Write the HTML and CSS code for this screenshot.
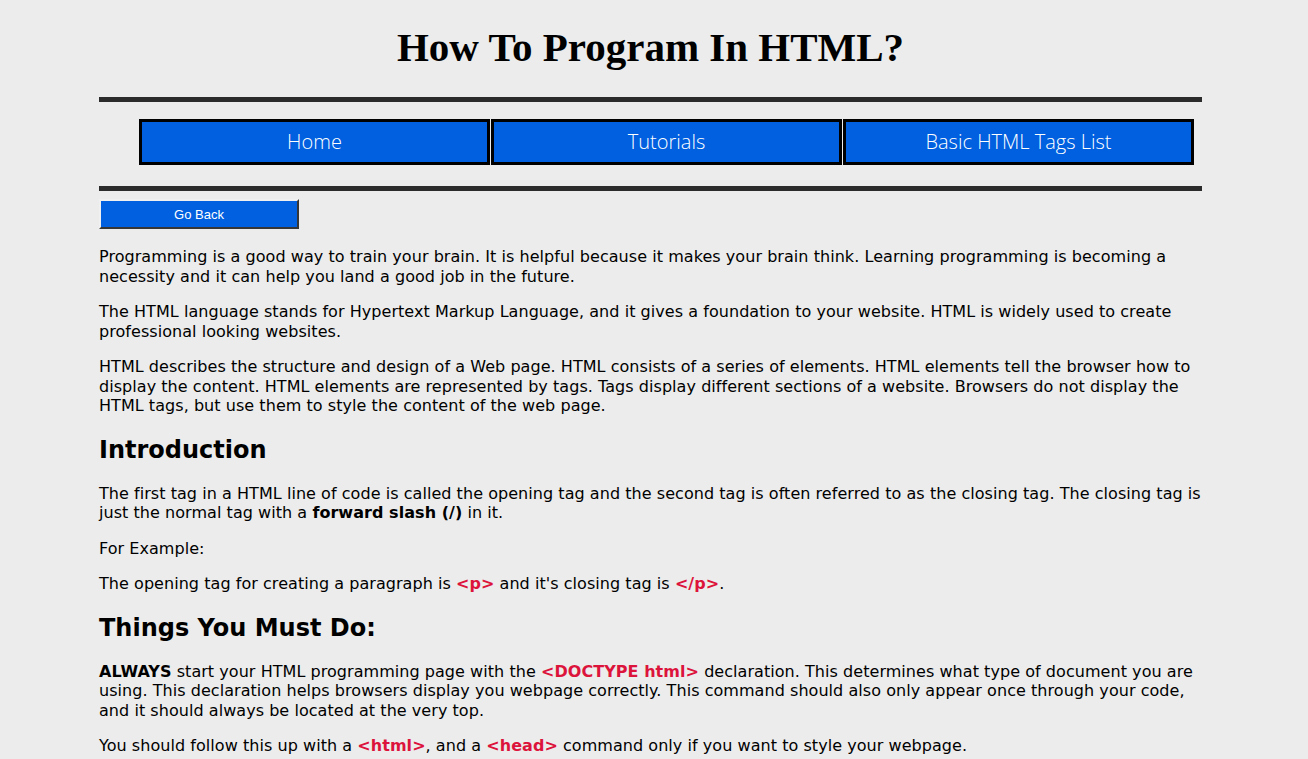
FILE: index.html
```html
<!DOCTYPE html>
<html>
<head>
<meta charset="utf-8">
<link rel="stylesheet" href="styles.css">
</head>
<body>
<div class="page">
  <h1 class="title">How To Program In HTML?</h1>
  <hr class="rule">
  <ul class="nav">
    <li class="nav-item">Home</li>
    <li class="nav-item">Tutorials</li>
    <li class="nav-item">Basic HTML Tags List</li>
  </ul>
  <hr class="rule">
  <button class="back">Go Back</button>
  <p>Programming is a good way to train your brain. It is helpful because it makes your brain think. Learning programming is becoming a necessity and it can help you land a good job in the future.</p>
  <p>The HTML language stands for Hypertext Markup Language, and it gives a foundation to your website. HTML is widely used to create professional looking websites.</p>
  <p>HTML describes the structure and design of a Web page. HTML consists of a series of elements. HTML elements tell the browser how to display the content. HTML elements are represented by tags. Tags display different sections of a website. Browsers do not display the HTML tags, but use them to style the content of the web page.</p>
  <h2>Introduction</h2>
  <p>The first tag in a HTML line of code is called the opening tag and the second tag is often referred to as the closing tag. The closing tag is just the normal tag with a <b>forward slash (/)</b> in it.</p>
  <p>For Example:</p>
  <p>The opening tag for creating a paragraph is <span class="code">&lt;p&gt;</span> and it's closing tag is <span class="code">&lt;/p&gt;</span>.</p>
  <h2>Things You Must Do:</h2>
  <p><b>ALWAYS</b> start your HTML programming page with the <span class="code">&lt;DOCTYPE html&gt;</span> declaration. This determines what type of document you are using. This declaration helps browsers display you webpage correctly. This command should also only appear once through your code, and it should always be located at the very top.</p>
  <p>You should follow this up with a <span class="code">&lt;html&gt;</span>, and a <span class="code">&lt;head&gt;</span> command only if you want to style your webpage.</p>
</div>
</body>
</html>
```
FILE: styles.css
```css
html, body {
  margin: 0;
  padding: 0;
  background: #ececec;
}
.page {
  width: 1103px;
  margin-left: 99px;
  font-family: "DejaVu Sans", Verdana, sans-serif;
  font-size: 16px;
  line-height: 19.5px;
  color: #000;
  padding-top: 1px;
}
.page p {
  letter-spacing: 0.05px;
  margin-right: -4px;
}
.title {
  font-family: "Liberation Serif", "DejaVu Serif", serif;
  font-weight: bold;
  font-size: 41px;
  line-height: 48px;
  text-align: center;
  margin: 22px 0 26px;
}
.rule {
  margin: 0;
  height: 5px;
  border: none;
  background: #2b2b2b;
}
.nav {
  list-style: none;
  display: flex;
  margin: 17px 0 21px;
  padding: 0 0 0 40px;
}
.nav-item {
  width: 351px;
  height: 46px;
  box-sizing: border-box;
  border: 3px solid #000;
  background: #0060e0;
  color: #fff;
  font-family: "Open Sans", sans-serif;
  font-weight: 300;
  font-size: 20px;
  display: flex;
  align-items: center;
  justify-content: center;
  margin-right: 1px;
}
.back {
  display: block;
  margin-top: 8px;
  margin-bottom: 18px;
  width: 200px;
  height: 30px;
  background: #0060e0;
  color: #fff;
  font-family: "Liberation Sans", Arial, sans-serif;
  font-size: 13px;
  border: 2px outset #f0f0f0;
  border-right-color: #8a8a8a;
  border-bottom-color: #8a8a8a;
  padding: 0;
}
p {
  margin: 16px 0;
}
h2 {
  font-size: 24px;
  line-height: 28px;
  margin: 20px 0;
  font-weight: bold;
}
.code {
  color: #dc143c;
  font-weight: bold;
}
```
